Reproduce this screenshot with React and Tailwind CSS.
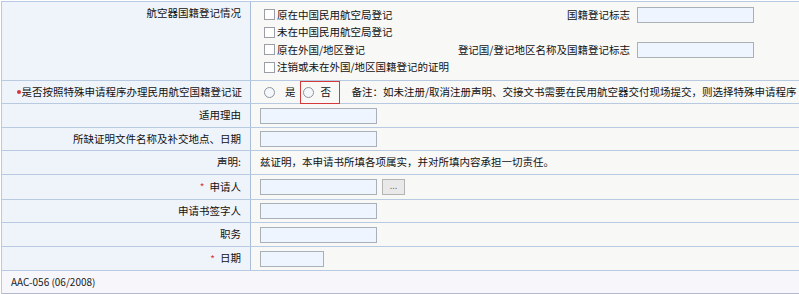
const FONT = '"Noto Sans CJK SC", "Liberation Sans", sans-serif';

function Checkbox() {
  return <span className="mr-[2px] inline-block h-[11px] w-[11px] shrink-0 border border-[#9a9ea6] bg-white" />;
}

function Radio() {
  return <span className="inline-block h-[11px] w-[11px] shrink-0 rounded-full border border-[#8e949c] bg-[#f4f7fb]" />;
}

function TextInput({ wide = true }) {
  return (
    <span
      className={`inline-block h-[16px] border border-[#aab0b8] bg-[#eef5ff] ${wide ? "w-[117px]" : "w-[64px]"}`}
    />
  );
}

function Row({ height, label, required, children }) {
  return (
    <div className={`flex border-b border-[#b8cae2] ${height}`}>
      <div className="flex w-[249px] shrink-0 items-center justify-end border-r border-[#a9bdd9] bg-[#eff3fa] pr-[9px]">
        {required && <span className="mr-[5px] text-[10px] text-[#d8343c]">*</span>}
        <span>{label}</span>
      </div>
      <div className="flex flex-1 items-center bg-[#f8f8f7] pl-[9px]">{children}</div>
    </div>
  );
}

const nationality = [
  { text: "原在中国民用航空局登记", extra: "国籍登记标志" },
  { text: "未在中国民用航空局登记" },
  { text: "原在外国/地区登记", extra: "登记国/登记地区名称及国籍登记标志" },
  { text: "注销或未在外国/地区国籍登记的证明" },
];

export default function App() {
  return (
    <div
      className="mt-px ml-px w-[800px] overflow-hidden border-t border-l border-[#b8cae2] text-[10.5px] leading-none text-[#111]"
      style={{ fontFamily: FONT }}
    >
      {/* 国籍登记情况 */}
      <div className="flex h-[79px] border-b border-[#b8cae2]">
        <div className="flex w-[249px] shrink-0 justify-end border-r border-[#a9bdd9] bg-[#eff3fa] pt-[6px] pr-[9px]">
          航空器国籍登记情况
        </div>
        <div className="flex-1 bg-[#f8f8f7] pt-[4px] pl-[13px]">
          {nationality.map((item) => (
            <div key={item.text} className="flex h-[17.5px] items-center">
              <Checkbox />
              <span>{item.text}</span>
              {item.extra && (
                <div className="ml-auto mr-[47px] flex items-center">
                  <span className="mr-[7px]">{item.extra}</span>
                  <TextInput />
                </div>
              )}
            </div>
          ))}
        </div>
      </div>

      {/* 特殊申请程序 */}
      <div className="flex h-[23px] border-b border-[#b8cae2]">
        <div className="flex w-[249px] shrink-0 items-center justify-end border-r border-[#a9bdd9] bg-[#eff3fa] pr-[8px]">
          <span className="mr-[1px] inline-block h-[4px] w-[4px] rounded-full bg-[#d8343c]" />
          <span>是否按照特殊申请程序办理民用航空国籍登记证</span>
        </div>
        <div className="flex flex-1 items-center bg-[#f8f8f7] pl-[13px]">
          <Radio />
          <span className="ml-[10px]">是</span>
          <div className="ml-[4px] flex h-[23px] w-[40px] items-center border border-[#d43a3a] pl-[2px]">
            <Radio />
            <span className="ml-[7px]">否</span>
          </div>
          <span className="ml-[12px] whitespace-nowrap">
            备注：如未注册/取消注册声明、交接文书需要在民用航空器交付现场提交，则选择特殊申请程序
          </span>
        </div>
      </div>

      <Row height="h-[24px]" label="适用理由">
        <TextInput />
      </Row>
      <Row height="h-[23px]" label="所缺证明文件名称及补交地点、日期">
        <TextInput />
      </Row>
      <Row height="h-[24px]" label="声明:">
        <span>兹证明，本申请书所填各项属实，并对所填内容承担一切责任。</span>
      </Row>
      <Row height="h-[25px]" label="申请人" required>
        <TextInput />
        <span className="ml-[5px] flex h-[16px] w-[23px] items-center justify-center border border-[#b4b4b4] bg-[#e9e9e9] pb-[3px] text-[9px] text-[#777]">
          ...
        </span>
      </Row>
      <Row height="h-[23px]" label="申请书签字人">
        <TextInput />
      </Row>
      <Row height="h-[24px]" label="职务">
        <TextInput />
      </Row>
      <Row height="h-[24px]" label="日期" required>
        <TextInput wide={false} />
      </Row>

      {/* 表单编号 */}
      <div className="flex h-[23px] items-center border-b border-[#b4b8cc] bg-[#f7f7fb] pl-[9px] text-[10px] text-[#222]">
        AAC-056 (06/2008)
      </div>
    </div>
  );
}
